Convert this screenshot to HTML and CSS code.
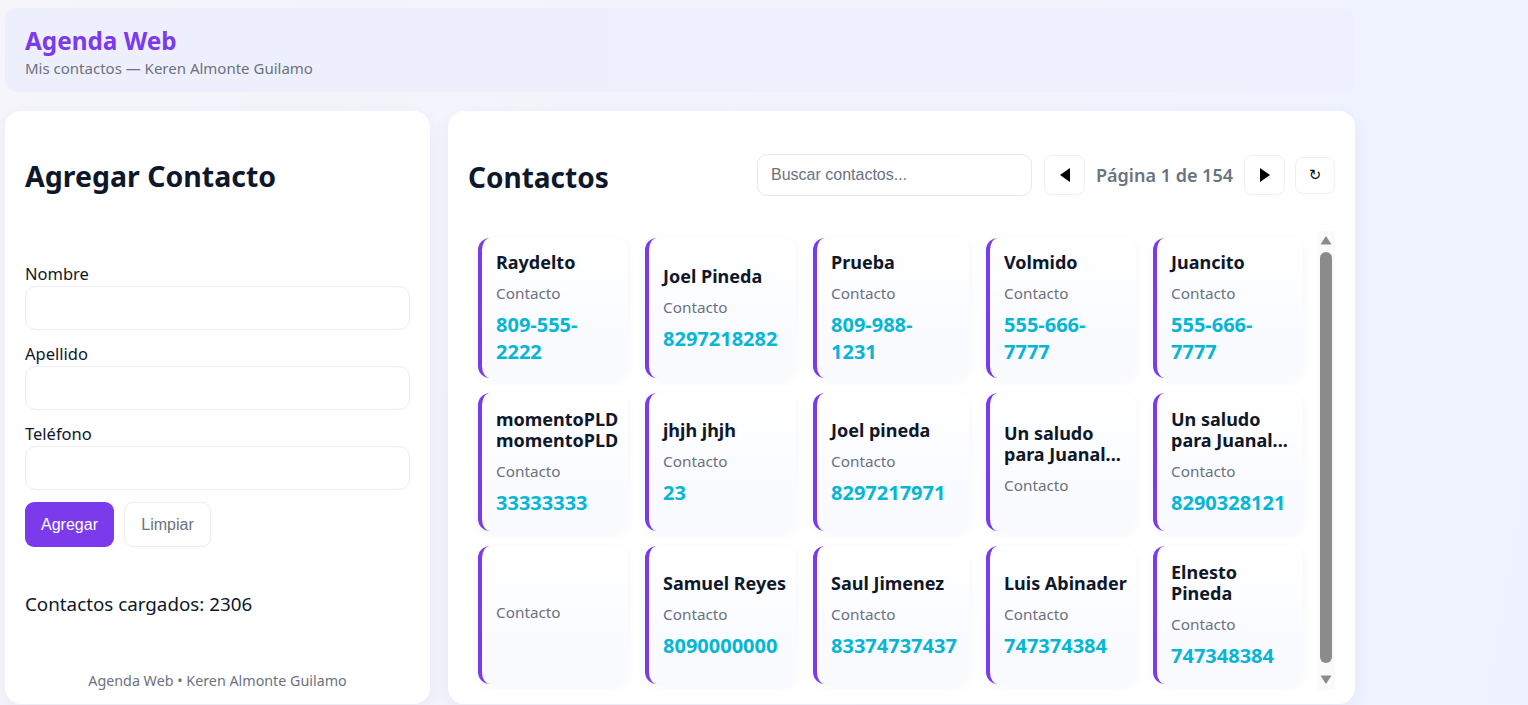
FILE: index.html
```html
<!DOCTYPE html>
<html lang="es">
<head>
<meta charset="utf-8">
<title>Agenda Web</title>
<link rel="stylesheet" href="styles.css">
</head>
<body>
<div class="app">
  <header class="topbar">
    <h1 class="brand">Agenda Web</h1>
    <p class="brand-sub">Mis contactos — Keren Almonte Guilamo</p>
  </header>
  <main class="layout">
    <section class="panel form-panel">
      <h2 class="panel-title">Agregar Contacto</h2>
      <form class="form">
        <label class="field-label">Nombre</label>
        <input class="field-input" type="text">
        <label class="field-label">Apellido</label>
        <input class="field-input" type="text">
        <label class="field-label">Teléfono</label>
        <input class="field-input" type="text">
        <div class="form-actions">
          <button type="button" class="btn btn-primary">Agregar</button>
          <button type="button" class="btn btn-ghost">Limpiar</button>
        </div>
      </form>
      <p class="count">Contactos cargados: 2306</p>
      <p class="footer">Agenda Web • Keren Almonte Guilamo</p>
    </section>
    <section class="panel list-panel">
      <div class="list-head">
        <h2 class="panel-title list-title">Contactos</h2>
        <div class="toolbar">
          <input class="search" type="text" placeholder="Buscar contactos...">
          <button type="button" class="pager-btn" aria-label="Anterior">
            <svg width="12" height="14" viewBox="0 0 12 14"><polygon points="11,0 11,14 1,7" fill="#000"/></svg>
          </button>
          <span class="page-label">Página 1 de 154</span>
          <button type="button" class="pager-btn" aria-label="Siguiente">
            <svg width="12" height="14" viewBox="0 0 12 14"><polygon points="1,0 1,14 11,7" fill="#000"/></svg>
          </button>
          <button type="button" class="pager-btn refresh" aria-label="Recargar">↻</button>
        </div>
      </div>
      <div class="scroller">
        <div class="scroll-view">
          <div class="grid">
            <article class="card"><h3 class="card-name">Raydelto</h3><p class="card-meta">Contacto</p><p class="card-phone">809-555-2222</p></article>
            <article class="card"><h3 class="card-name">Joel&nbsp;Pineda</h3><p class="card-meta">Contacto</p><p class="card-phone">8297218282</p></article>
            <article class="card"><h3 class="card-name">Prueba</h3><p class="card-meta">Contacto</p><p class="card-phone">809-988-<br>1231</p></article>
            <article class="card"><h3 class="card-name">Volmido</h3><p class="card-meta">Contacto</p><p class="card-phone">555-666-7777</p></article>
            <article class="card"><h3 class="card-name">Juancito</h3><p class="card-meta">Contacto</p><p class="card-phone">555-666-7777</p></article>

            <article class="card"><h3 class="card-name">momentoPLD momentoPLD</h3><p class="card-meta">Contacto</p><p class="card-phone">33333333</p></article>
            <article class="card"><h3 class="card-name">jhjh&nbsp;jhjh</h3><p class="card-meta">Contacto</p><p class="card-phone">23</p></article>
            <article class="card"><h3 class="card-name">Joel&nbsp;pineda</h3><p class="card-meta">Contacto</p><p class="card-phone">8297217971</p></article>
            <article class="card"><h3 class="card-name">Un saludo para Juanal...</h3><p class="card-meta">Contacto</p></article>
            <article class="card"><h3 class="card-name">Un saludo para Juanal...</h3><p class="card-meta">Contacto</p><p class="card-phone">8290328121</p></article>

            <article class="card"><p class="card-meta">Contacto</p></article>
            <article class="card"><h3 class="card-name">Samuel&nbsp;Reyes</h3><p class="card-meta">Contacto</p><p class="card-phone">8090000000</p></article>
            <article class="card"><h3 class="card-name">Saul&nbsp;Jimenez</h3><p class="card-meta">Contacto</p><p class="card-phone">83374737437</p></article>
            <article class="card"><h3 class="card-name">Luis&nbsp;Abinader</h3><p class="card-meta">Contacto</p><p class="card-phone">747374384</p></article>
            <article class="card"><h3 class="card-name">Elnesto Pineda</h3><p class="card-meta">Contacto</p><p class="card-phone">747348384</p></article>
          </div>
        </div>
        <div class="scrollbar" aria-hidden="true">
          <svg class="sb-arrow" width="12" height="10" viewBox="0 0 12 10"><polygon points="6,1 11.5,9.5 0.5,9.5" fill="#8b8b8b"/></svg>
          <div class="sb-thumb"></div>
          <svg class="sb-arrow sb-down" width="12" height="10" viewBox="0 0 12 10"><polygon points="0.5,0.5 11.5,0.5 6,9" fill="#8b8b8b"/></svg>
        </div>
      </div>
    </section>
  </main>
</div>
</body>
</html>
```

FILE: styles.css
```css
* { box-sizing: border-box; }

html, body {
  margin: 0;
  height: 100%;
  overflow: hidden;
}

body {
  font-family: "Noto Sans", "Open Sans", sans-serif;
  color: #0f172a;
  background: linear-gradient(100deg, #f5f5fb 0%, #f1f3fd 60%, #eef2ff 100%);
}

.app {
  width: 1350px;
  margin-left: 5px;
  padding-top: 8px;
}

.topbar {
  height: 84px;
  border-radius: 12px;
  background: linear-gradient(90deg, #eeeffc 0%, #eef0fd 100%);
  padding: 18px 20px 0;
}

.brand {
  margin: 0;
  font-size: 24.3px;
  line-height: 30px;
  font-weight: 700;
  color: #7c3aed;
}

.brand-sub {
  margin: 2px 0 0;
  font-size: 15px;
  line-height: 20px;
  color: #6b7280;
}

.layout {
  display: grid;
  grid-template-columns: 425px 907px;
  grid-template-rows: 593px;
  column-gap: 18px;
  margin-top: 19px;
}

.panel {
  background: #ffffff;
  border-radius: 16px;
  box-shadow: 0 6px 20px rgba(30, 41, 90, 0.05);
  padding: 20px;
}

.panel-title {
  margin: 0;
  font-size: 28.5px;
  line-height: 34px;
  font-weight: 700;
  color: #0f172a;
}

/* left form panel */
.form-panel {
  display: flex;
  flex-direction: column;
  padding-bottom: 13px;
}

.form-panel .panel-title {
  margin-top: 28px;
}

.form {
  display: flex;
  flex-direction: column;
  margin-top: 70px;
}

.field-label {
  font-size: 16.5px;
  line-height: 22px;
  color: #0f172a;
}

.field-input {
  height: 44px;
  margin: 1px 0 13px;
  border: 1px solid #eaecf0;
  border-radius: 11px;
  background: #fff;
  font: 15px "Liberation Sans", Arial, sans-serif;
  padding: 0 12px;
}

.form-actions {
  display: flex;
  gap: 10px;
  margin-top: -1px;
}

.btn {
  height: 45px;
  border-radius: 9px;
  font: 16px "Liberation Sans", Arial, sans-serif;
  padding: 0;
  cursor: pointer;
}

.btn-primary {
  width: 89px;
  background: #7c3aed;
  color: #ffffff;
  border: 0;
}

.btn-ghost {
  width: 87px;
  background: #ffffff;
  color: #6b7280;
  border: 1px solid #eaecf0;
}

.count {
  margin: 45px 0 0;
  font-size: 18.8px;
  line-height: 25px;
  color: #0f172a;
}

.footer {
  margin: auto 0 0;
  text-align: center;
  font-size: 14.3px;
  line-height: 20px;
  color: #6b7280;
}

/* right list panel */
.list-panel {
  display: flex;
  flex-direction: column;
  padding-bottom: 14px;
}

.list-head {
  display: flex;
  align-items: center;
  justify-content: space-between;
  margin-top: 23px;
  height: 42px;
}

.list-title {
  font-size: 28px;
  position: relative;
  top: 2px;
}

.toolbar {
  display: flex;
  align-items: center;
}

.search {
  width: 275px;
  height: 42px;
  border: 1px solid #e6e8ee;
  border-radius: 10px;
  padding: 0 13px;
  font: 16px "Liberation Sans", Arial, sans-serif;
  color: #0f172a;
  background: #fff;
  margin-right: 12px;
}

.search::placeholder {
  color: #6b7280;
}

.pager-btn {
  width: 41px;
  height: 40px;
  display: flex;
  align-items: center;
  justify-content: center;
  border: 1px solid #eef0f4;
  border-radius: 8px;
  background: #ffffff;
  padding: 0;
  color: #000;
  cursor: pointer;
}

.page-label {
  margin: 0 11px;
  font-size: 18px;
  font-weight: 600;
  color: #6b7280;
}

.refresh {
  width: 40px;
  height: 37px;
  margin-left: 10px;
  font: 15px "DejaVu Sans", sans-serif;
  color: #111;
}

.scroller {
  display: flex;
  margin-top: 35px;
  height: 459px;
}

.scroll-view {
  flex: 1;
  overflow: hidden;
  padding: 7px 14px 0 10px;
}

.scrollbar {
  width: 18px;
  flex: none;
  display: flex;
  flex-direction: column;
  align-items: center;
  padding: 4px 0 5px;
  background: #fafafa;
}

.sb-arrow {
  display: block;
  flex: none;
}

.sb-thumb {
  width: 12px;
  height: 412px;
  margin: 7px 0 12px;
  border-radius: 6px;
  background: #8b8b8b;
}

.grid {
  display: grid;
  grid-template-columns: 150px 151px 156px 150px 150px;
  grid-auto-rows: minmax(138px, auto);
  column-gap: 17px;
  row-gap: 15px;
}

.card {
  display: flex;
  flex-direction: column;
  justify-content: center;
  border-left: 4px solid #7c3aed;
  border-radius: 12px;
  background: linear-gradient(180deg, #ffffff 0%, #f8faff 100%);
  box-shadow: 0 3px 12px rgba(30, 41, 90, 0.04);
  padding: 14px 8px 13px 14px;
}

.card-name {
  margin: 0 0 10px;
  font-size: 18px;
  line-height: 21px;
  font-weight: 700;
  color: #0f172a;
}

.card-meta {
  margin: 0 0 8px;
  font-size: 15.3px;
  line-height: 20px;
  color: #6b7280;
}

.card-phone {
  margin: 0;
  font-size: 20px;
  line-height: 27px;
  font-weight: 700;
  color: #06b6d4;
}
```
